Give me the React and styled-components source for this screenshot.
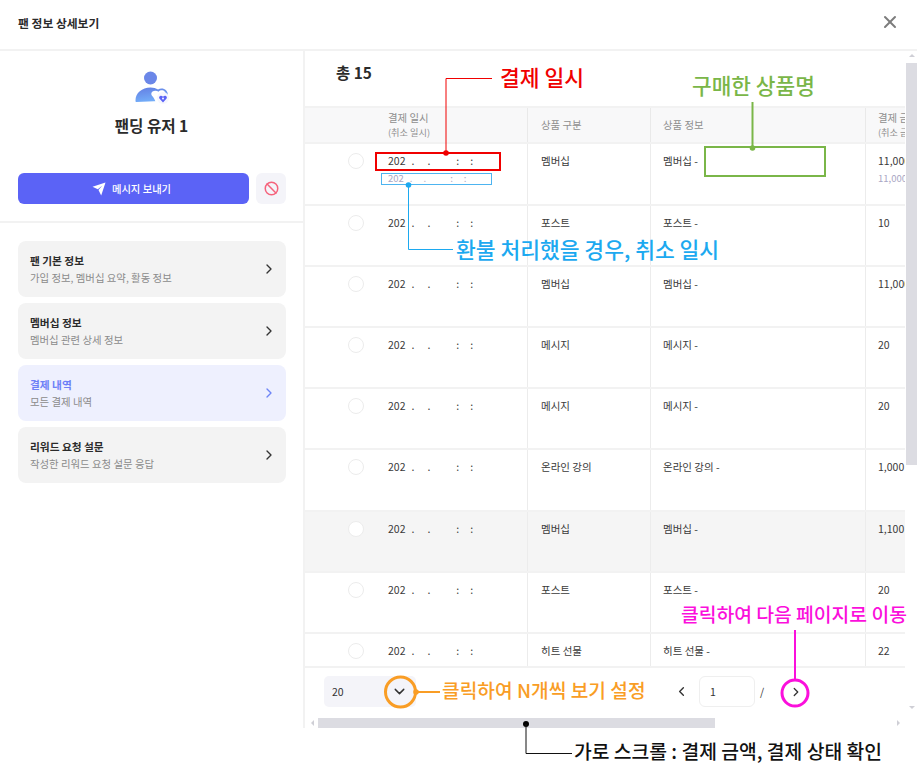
import React from "react";
import styled, { createGlobalStyle } from "styled-components";
import { X, ChevronRight, ChevronLeft, ChevronDown, Ban } from "lucide-react";

const GlobalStyle = createGlobalStyle`
  html, body {
    margin: 0;
    padding: 0;
    background: #fff;
  }
  * {
    box-sizing: border-box;
  }
  body {
    font-family: "Noto Sans CJK KR", "Noto Sans", sans-serif;
    color: #333;
  }
`;

const menu = [
  { title: "팬 기본 정보", sub: "가입 정보, 멤버십 요약, 활동 정보" },
  { title: "멤버십 정보", sub: "멤버십 관련 상세 정보" },
  { title: "결제 내역", sub: "모든 결제 내역", active: true },
  { title: "리워드 요청 설문", sub: "작성한 리워드 요청 설문 응답" },
];

const rows = [
  { kind: "멤버십", amount: "11,000", cancelled: "11,000", height: 62 },
  { kind: "포스트", amount: "10", height: 61 },
  { kind: "멤버십", amount: "11,000", height: 61 },
  { kind: "메시지", amount: "20", height: 61 },
  { kind: "메시지", amount: "20", height: 61 },
  { kind: "온라인 강의", amount: "1,000", height: 62 },
  { kind: "멤버십", amount: "1,100", height: 61, hover: true },
  { kind: "포스트", amount: "20", height: 61 },
  { kind: "히트 선물", amount: "22", height: 34 },
];

const Page = styled.div`
  position: relative;
  width: 917px;
  height: 780px;
  overflow: hidden;
  background: #fff;
`;

const Header = styled.header`
  height: 51px;
  padding: 0 18px;
  display: flex;
  align-items: center;
  justify-content: space-between;
  border-bottom: 2px solid #f2f2f2;
`;

const HeaderTitle = styled.h1`
  margin: 0 0 5px;
  font-size: 11.8px;
  font-weight: 700;
  color: #2b2b2b;
`;

const CloseButton = styled.span`
  display: flex;
  margin: 0 -1px 5px 0;
  color: #7c7c7c;
`;

const Body = styled.div`
  display: flex;
  height: 677px;
`;

const Sidebar = styled.aside`
  width: 305px;
  flex: none;
  border-right: 2px solid #f2f2f2;
`;

const Profile = styled.div`
  display: flex;
  flex-direction: column;
  align-items: center;
  padding-top: 20px;
  height: 122px;
`;

const UserName = styled.div`
  margin-top: 9px;
  font-size: 15.6px;
  font-weight: 700;
  line-height: 22px;
  color: #2b2b2b;
`;

const Actions = styled.div`
  display: flex;
  gap: 7px;
  padding: 0 17px 17px 18px;
  border-bottom: 2px solid #f2f2f2;
`;

const SendButton = styled.div`
  flex: 1;
  height: 31px;
  padding-right: 4px;
  display: flex;
  align-items: center;
  justify-content: center;
  gap: 6px;
  border-radius: 6px;
  background: #5b63f6;
  color: #fff;
  font-size: 10.3px;
  font-weight: 500;
`;

const BlockButton = styled.div`
  width: 30px;
  height: 31px;
  display: flex;
  align-items: center;
  justify-content: center;
  border-radius: 6px;
  background: #f4f4f9;
  color: #f5637c;
`;

const Menu = styled.nav`
  display: flex;
  flex-direction: column;
  gap: 6px;
  padding: 18px 17px 0 18px;
`;

const MenuCard = styled.div`
  height: 56px;
  padding: 0 9px 0 12px;
  display: flex;
  align-items: center;
  justify-content: space-between;
  border-radius: 8px;
  background: ${(p) => (p.$active ? "#eef0fe" : "#f3f3f3")};
  color: ${(p) => (p.$active ? "#6d84f7" : "#333")};
`;

const MenuTitle = styled.div`
  font-size: 10.7px;
  font-weight: 700;
  line-height: 16px;
  color: ${(p) => (p.$active ? "#6d7ff7" : "#2b2b2b")};
`;

const MenuSub = styled.div`
  font-size: 10.4px;
  line-height: 17px;
  color: #8b8b8b;
`;

const Main = styled.main`
  flex: 1;
  min-width: 0;
  display: flex;
`;

const Content = styled.div`
  width: 600px;
  flex: none;
  display: flex;
  flex-direction: column;
`;

const Total = styled.div`
  height: 55px;
  padding: 10px 0 0 31px;
  font-size: 15.4px;
  font-weight: 700;
  line-height: 22px;
  color: #2b2b2b;
`;

const Table = styled.div`
  height: 562px;
  overflow: hidden;
  border-bottom: 2px solid #f2f2f2;
`;

const Row = styled.div`
  display: grid;
  grid-template-columns: 83px 140px 123px 215px 120px;
  width: 681px;
  height: ${(p) => p.$height}px;
  background: ${(p) => (p.$hover ? "#f5f5f5" : "#fff")};
  border-bottom: 2px solid #f2f2f2;
`;

const HeadRow = styled(Row)`
  background: #f8f8f9;
  border-top: 2px solid #f2f2f2;
  color: #8f8f8f;
  font-size: 10.4px;
`;

const HeadCell = styled.div`
  display: flex;
  flex-direction: column;
  justify-content: center;
  padding-left: ${(p) => p.$pad ?? 12}px;
  line-height: 14px;
  border-right: ${(p) => (p.$line ? "1px solid #e9e9e9" : "none")};
`;

const HeadSub = styled.span`
  font-size: 9.2px;
`;

const Cell = styled.div`
  padding: 8px 0 0 ${(p) => p.$pad ?? 12}px;
  font-size: 10.5px;
  line-height: 18px;
  color: #3a3a3a;
  white-space: nowrap;
  border-right: ${(p) => (p.$line ? "1px solid #ececec" : "none")};
`;

const CheckCell = styled.div`
  padding: 9px 0 0 43px;
`;

const Radio = styled.span`
  display: block;
  width: 16px;
  height: 16px;
  border-radius: 50%;
  border: 1px solid #ececec;
  background: #fff;
`;

const Stamp = styled.div`
  color: ${(p) => (p.$sub ? "#a9a6c4" : "#3a3a3a")};
  font-size: ${(p) => (p.$sub ? 9.5 : 10.5)}px;
  line-height: ${(p) => (p.$sub ? 17 : 18)}px;
`;

const Mark = styled.span`
  display: inline-block;
  margin-left: ${(p) => p.$gap}px;
`;

const Refund = styled.div`
  color: #a9a6c4;
  font-size: 9.5px;
  line-height: 17px;
`;

const Footer = styled.div`
  height: 50px;
  display: flex;
  align-items: center;
  padding: 0 0 3px 19px;
`;

const PageSize = styled.div`
  width: 92px;
  height: 31px;
  padding: 0 8px;
  display: flex;
  align-items: center;
  justify-content: space-between;
  border-radius: 5px;
  background: #f4f4f9;
  font-size: 10.5px;
  color: #333;
`;

const Pager = styled.div`
  margin-left: 258px;
  display: flex;
  align-items: center;
  color: #333;
  font-size: 10.5px;
`;

const PageInput = styled.div`
  width: 56px;
  height: 31px;
  margin: 0 5px 0 10px;
  padding-left: 10px;
  display: flex;
  align-items: center;
  border: 1px solid #efefef;
  border-radius: 6px;
`;

const NextIcon = styled.span`
  display: flex;
  margin-left: 25px;
`;

const HorizontalBar = styled.div`
  height: 10px;
  padding-left: 13px;
  position: relative;
`;

const BarThumb = styled.div`
  width: 397px;
  height: 100%;
  background: #dcdce2;
`;

const Arrow = styled.span`
  position: absolute;
  width: 0;
  height: 0;
  border: 3px solid transparent;
  left: ${(p) => p.$left}px;
  top: ${(p) => p.$top}px;
  ${(p) => `border-${p.$side}-color: #cfcfd6;`}
`;

const VerticalBar = styled.div`
  width: 11px;
  margin-left: 1px;
  height: 664px;
  padding-top: 12px;
  position: relative;
`;

const VerticalThumb = styled.div`
  height: 402px;
  background: #dcdce2;
`;

const Callout = styled.div`
  position: absolute;
  left: ${(p) => p.$x}px;
  top: ${(p) => p.$y}px;
  transform: translateY(-50%);
  font-size: ${(p) => p.$size}px;
  font-weight: 500;
  line-height: 1.2;
  white-space: nowrap;
  color: ${(p) => p.$color};
`;

const Overlay = styled.svg`
  position: absolute;
  left: 0;
  top: 0;
  pointer-events: none;
`;

const UserIcon = () => (
  <svg width="34" height="34" viewBox="0 0 34 34">
    <defs>
      <linearGradient id="userFill" x1="0.2" y1="0" x2="0.5" y2="1">
        <stop offset="0" stopColor="#6480e4" />
        <stop offset="1" stopColor="#74b0fa" />
      </linearGradient>
    </defs>
    <circle cx="15.5" cy="7" r="6.5" fill="#6b87e8" />
    <path
      d="M1.500 31C.7 31 .5 30.500 .5 29.500c0-7.500 6.500-13 15-13 3 0 5.500.8 7.500 2 2.500-1.600 6-1.300 8 .7 1.500 1.500 2 3.200 1.800 5l-8 5.800z"
      fill="url(#userFill)"
    />
    <path
      d="M23.500 20.800c1.700-1.800 4.700-2 6.200-.2 1.400 1.700 1 3.800-.4 5.300l-5.800 5.100h-3c-.6-2.300-1.800-4.300-3.300-5.900-1.200-1.400-1.200-3.300 0-4.300 1.700-1.400 4.600-1.500 6.300 0z"
      fill="#fff"
    />
    <circle cx="28" cy="27" r="6" fill="#f6f7fe" />
    <path
      d="M28 31.500l-3.400-3.700c-1-1.200-.4-2.900 1-3.100.9-.1 1.800.3 2.400 1 .6-.7 1.500-1.100 2.400-1 1.400.2 2 1.900 1 3.100z"
      fill="#5b63f6"
    />
    <circle cx="28" cy="27.500" r="1" fill="#f6f7fe" />
  </svg>
);

const PlaneIcon = () => (
  <svg width="14" height="14" viewBox="0 0 14 14">
    <path d="M13.500.5 9.200 13.500 6.500 8 10.400 3.600 5.800 7.300.5 4.800z" fill="#fff" />
  </svg>
);

const DateStamp = ({ sub }) =>
  sub ? (
    <Stamp $sub>
      202
      <Mark $gap={6}>.</Mark>
      <Mark $gap={11}>.</Mark>
      <Mark $gap={24}>:</Mark>
      <Mark $gap={11}>:</Mark>
    </Stamp>
  ) : (
    <Stamp>
      202
      <Mark $gap={6}>.</Mark>
      <Mark $gap={13}>.</Mark>
      <Mark $gap={26}>:</Mark>
      <Mark $gap={11}>:</Mark>
    </Stamp>
  );

const Annotations = () => (
  <>
    <Overlay width="917" height="780" viewBox="0 0 917 780" fill="none">
      <rect x="376" y="153" width="124" height="17" stroke="#f00000" strokeWidth="2" />
      <path d="M446 153V78.500H492" stroke="#f00000" />
      <circle cx="446" cy="153" r="2.800" fill="#f00000" />

      <rect x="381.500" y="173.500" width="110" height="11" stroke="#4db4f0" />
      <path d="M408.500 185V249.500H453" stroke="#1ca9f0" />
      <circle cx="408.500" cy="185" r="2.800" fill="#1ca9f0" />

      <rect x="705" y="147" width="120" height="29" stroke="#7ab648" strokeWidth="2" />
      <path d="M752.500 102V147" stroke="#7ab648" strokeWidth="2" />
      <circle cx="752.500" cy="148" r="2.800" fill="#7ab648" />

      <circle cx="400.500" cy="692" r="15" stroke="#f99d25" strokeWidth="3" />
      <path d="M415 692H440" stroke="#f99d25" strokeWidth="2" />
      <circle cx="416" cy="692" r="2.800" fill="#f99d25" />

      <circle cx="795" cy="693" r="13" stroke="#fb0fdc" strokeWidth="3" />
      <path d="M795 630V680" stroke="#fb0fdc" strokeWidth="2" />

      <circle cx="526" cy="724" r="3" fill="#000" />
      <path d="M526 724V753.500H572" stroke="#111" />
    </Overlay>
    <Callout $x={500} $y={77} $size={21.5} $color="#f00000">결제 일시</Callout>
    <Callout $x={692} $y={85} $size={21.4} $color="#7ab648">구매한 상품명</Callout>
    <Callout $x={456} $y={249} $size={21.5} $color="#1ca9f0">환불 처리했을 경우, 취소 일시</Callout>
    <Callout $x={442} $y={691} $size={19.2} $color="#f99d25">클릭하여 N개씩 보기 설정</Callout>
    <Callout $x={681} $y={615} $size={19.3} $color="#fb0fdc">클릭하여 다음 페이지로 이동</Callout>
    <Callout $x={574} $y={752} $size={19.3} $color="#111">가로 스크롤 : 결제 금액, 결제 상태 확인</Callout>
  </>
);

export default function App() {
  return (
    <Page>
      <GlobalStyle />
      <Header>
        <HeaderTitle>팬 정보 상세보기</HeaderTitle>
        <CloseButton>
          <X size={20} strokeWidth={2.4} />
        </CloseButton>
      </Header>
      <Body>
        <Sidebar>
          <Profile>
            <UserIcon />
            <UserName>팬딩 유저 1</UserName>
          </Profile>
          <Actions>
            <SendButton>
              <PlaneIcon />
              메시지 보내기
            </SendButton>
            <BlockButton>
              <Ban size={15} strokeWidth={2.4} />
            </BlockButton>
          </Actions>
          <Menu>
            {menu.map((item) => (
              <MenuCard key={item.title} $active={item.active}>
                <div>
                  <MenuTitle $active={item.active}>{item.title}</MenuTitle>
                  <MenuSub>{item.sub}</MenuSub>
                </div>
                <ChevronRight size={16} strokeWidth={2} />
              </MenuCard>
            ))}
          </Menu>
        </Sidebar>
        <Main>
          <Content>
            <Total>총 15</Total>
            <Table>
              <HeadRow $height={38}>
                <HeadCell />
                <HeadCell $pad={0} $line>
                  결제 일시
                  <HeadSub>(취소 일시)</HeadSub>
                </HeadCell>
                <HeadCell $pad={13} $line>상품 구분</HeadCell>
                <HeadCell $line>상품 정보</HeadCell>
                <HeadCell>
                  결제 금액
                  <HeadSub>(취소 금액)</HeadSub>
                </HeadCell>
              </HeadRow>
              {rows.map((row, i) => (
                <Row key={i} $height={row.height} $hover={row.hover}>
                  <CheckCell>
                    <Radio />
                  </CheckCell>
                  <Cell $pad={0} $line>
                    <DateStamp />
                    {row.cancelled && <DateStamp sub />}
                  </Cell>
                  <Cell $pad={13} $line>{row.kind}</Cell>
                  <Cell $line>{row.kind} -</Cell>
                  <Cell>
                    {row.amount}
                    {row.cancelled && <Refund>{row.cancelled}</Refund>}
                  </Cell>
                </Row>
              ))}
            </Table>
            <Footer>
              <PageSize>
                20
                <ChevronDown size={17} strokeWidth={2} />
              </PageSize>
              <Pager>
                <ChevronLeft size={15} strokeWidth={2.2} />
                <PageInput>1</PageInput>
                /
                <NextIcon>
                  <ChevronRight size={14} strokeWidth={2.2} />
                </NextIcon>
              </Pager>
            </Footer>
            <HorizontalBar>
              <Arrow $side="right" $left={3} $top={2} />
              <BarThumb />
              <Arrow $side="left" $left={592} $top={2} />
            </HorizontalBar>
          </Content>
          <VerticalBar>
            <Arrow $side="bottom" $left={3} $top={0} />
            <VerticalThumb />
            <Arrow $side="top" $left={3} $top={655} />
          </VerticalBar>
        </Main>
      </Body>
      <Annotations />
    </Page>
  );
}
